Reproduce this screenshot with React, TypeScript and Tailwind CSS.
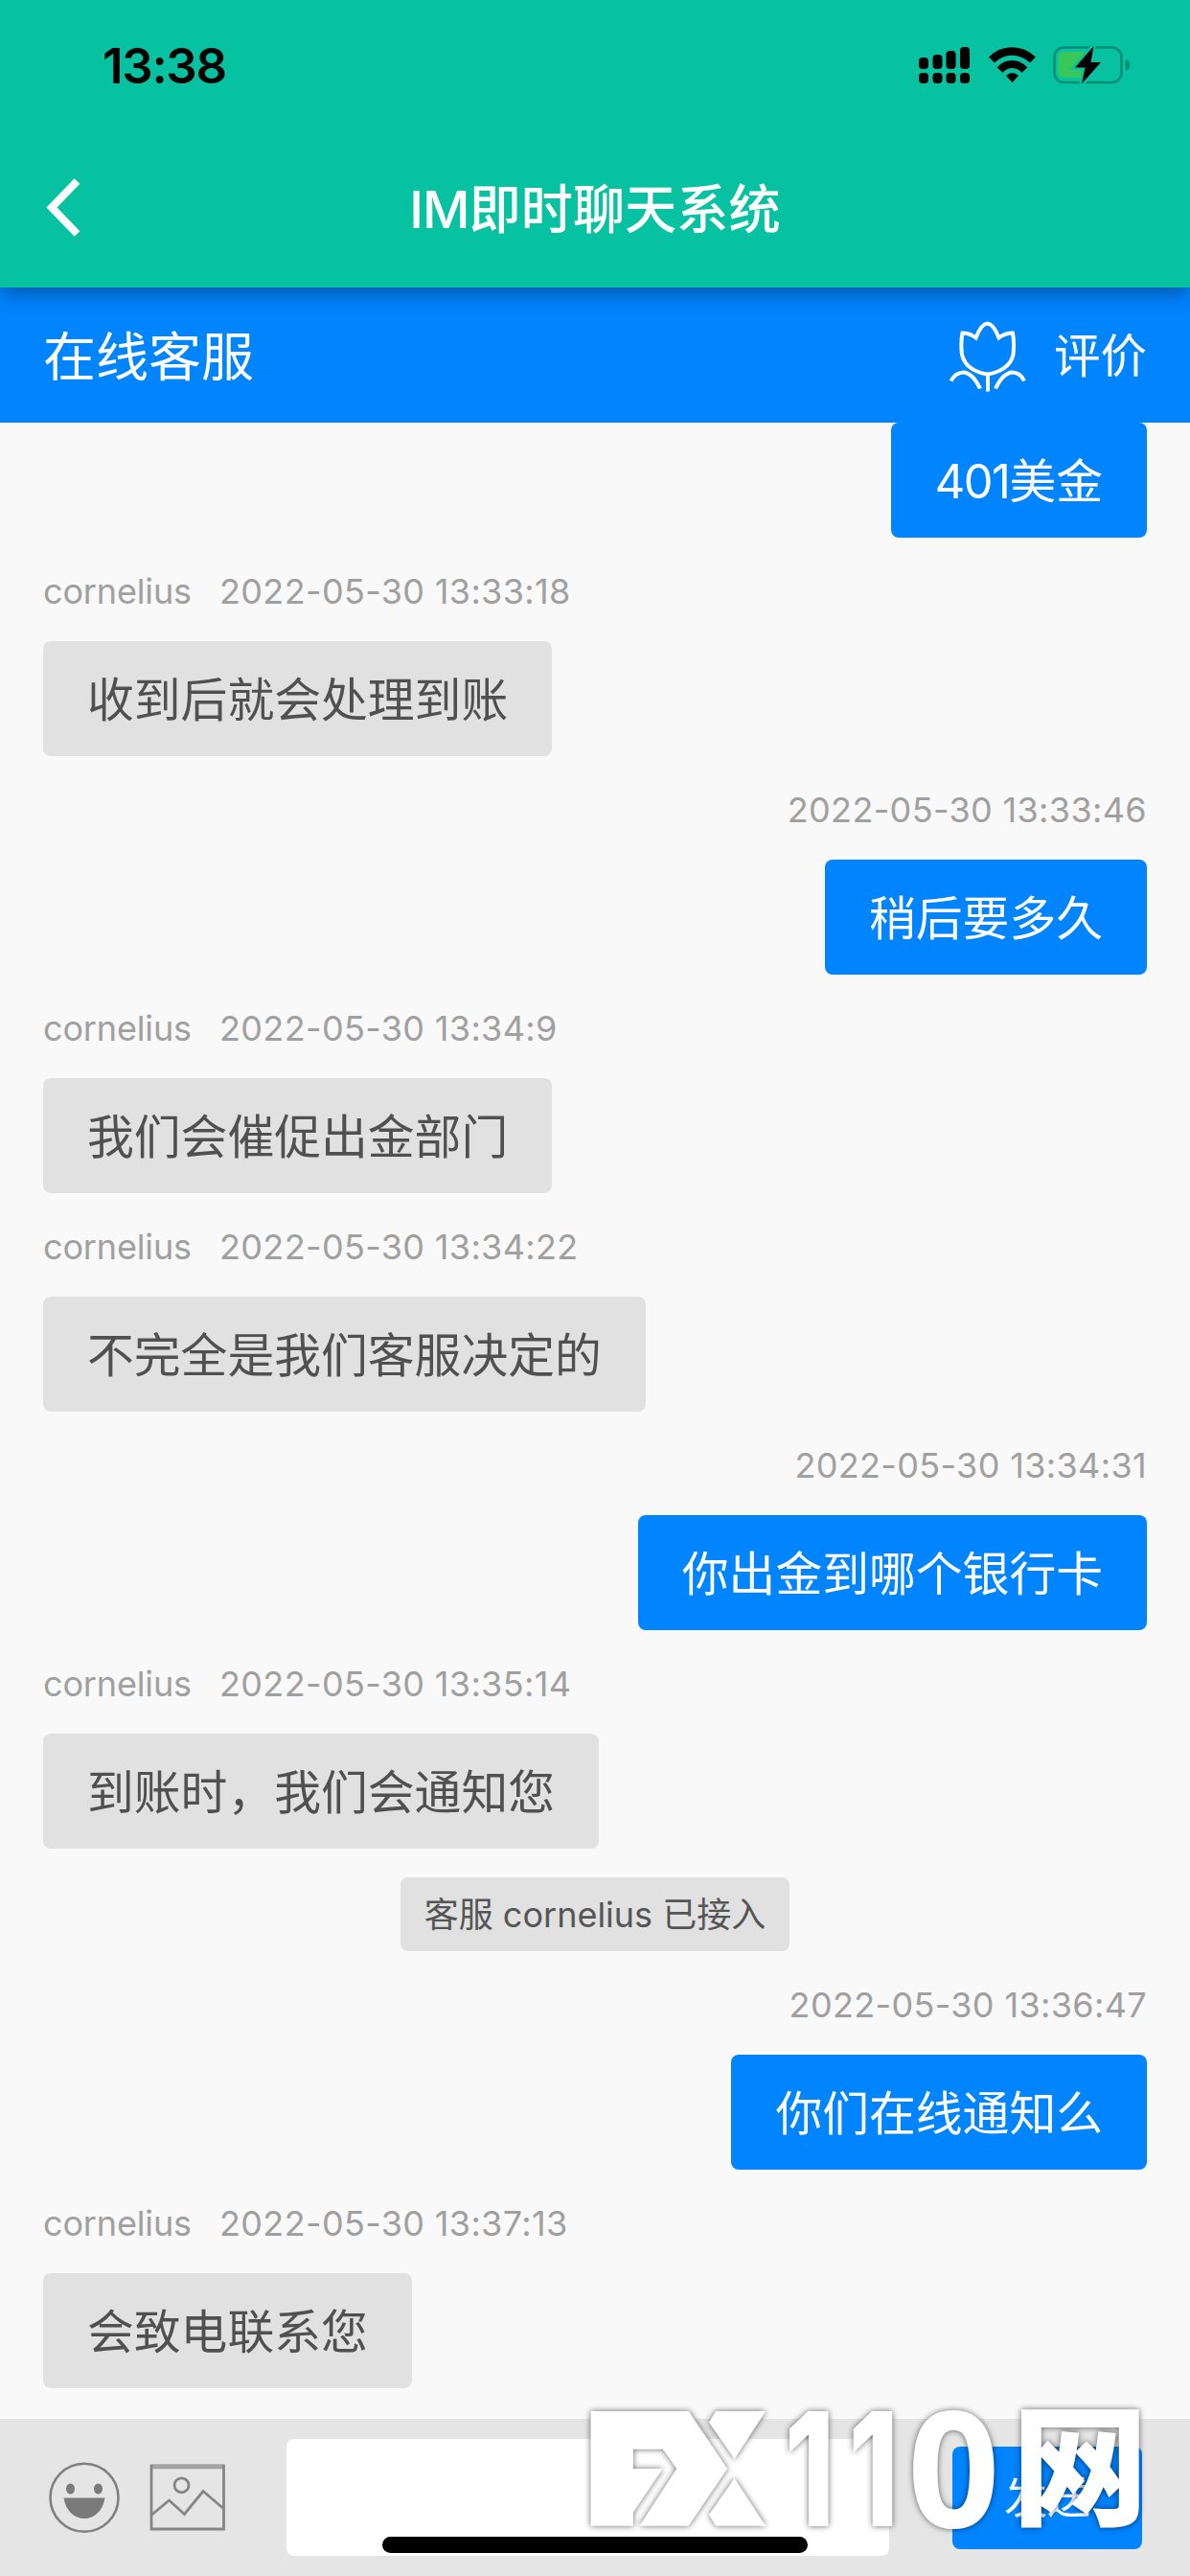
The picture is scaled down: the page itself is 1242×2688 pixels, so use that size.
type Message = {
  from: 'agent' | 'me' | 'system';
  time?: string;
  text: string;
};

const messages: Message[] = [
  { from: 'agent', time: '2022-05-30 13:33:18', text: '收到后就会处理到账' },
  { from: 'me', time: '2022-05-30 13:33:46', text: '稍后要多久' },
  { from: 'agent', time: '2022-05-30 13:34:9', text: '我们会催促出金部门' },
  { from: 'agent', time: '2022-05-30 13:34:22', text: '不完全是我们客服决定的' },
  { from: 'me', time: '2022-05-30 13:34:31', text: '你出金到哪个银行卡' },
  { from: 'agent', time: '2022-05-30 13:35:14', text: '到账时，我们会通知您' },
  { from: 'system', text: '客服 cornelius 已接入' },
  { from: 'me', time: '2022-05-30 13:36:47', text: '你们在线通知么' },
  { from: 'agent', time: '2022-05-30 13:37:13', text: '会致电联系您' },
];

function StatusIcons() {
  return (
    <svg width="230" height="48" viewBox="953 44 230 48" fill="none">
      <g fill="#000">
        <rect x="958" y="60" width="10" height="12" rx="4" />
        <rect x="972.500" y="57" width="10" height="15" rx="4" />
        <rect x="986.500" y="53" width="10" height="19" rx="4" />
        <rect x="1001" y="49" width="10" height="23" rx="4" />
        <rect x="958" y="76" width="10" height="11" rx="4" />
        <rect x="972.500" y="76" width="10" height="11" rx="4" />
        <rect x="986.500" y="76" width="10" height="11" rx="4" />
        <rect x="1001" y="76" width="10" height="11" rx="4" />
      </g>
      <path d="M1034 62.500 C1046 50.500 1064 50.500 1077 62.500" stroke="#000" strokeWidth="8.500" />
      <path d="M1042.500 73 C1050 65 1060.500 65 1068.500 73" stroke="#000" strokeWidth="8" />
      <path d="M1055.500 86 L1049 79 Q1055.500 73 1062 79 Z" fill="#000" />
      <rect x="1099.500" y="49.500" width="70" height="36.500" rx="10" stroke="#078e77" strokeWidth="2.600" />
      <path d="M1173.500 62 Q1178.500 63 1178.500 68 Q1178.500 73 1173.500 74 Z" fill="#078e77" />
      <path d="M1109 54 H1131 L1122 71 H1130 L1128 81 H1109 Q1103.500 81 1103.500 75 V60 Q1103.500 54 1109 54 Z" fill="#37c85a" />
      <path
        d="M1140.500 48 L1121 70.500 H1131.500 L1128 87.500 L1148 65 H1137.500 Z"
        fill="#000"
        stroke="#06c2a0"
        strokeWidth="5"
        paintOrder="stroke"
      />
    </svg>
  );
}

function Tulip() {
  return (
    <svg width="84" height="80" viewBox="985 331 84 80" fill="none" stroke="#fff" strokeWidth="4">
      <path d="M1016.500 352.500 C1019 346 1023 338 1028.500 337.500 C1034 338 1038 346 1040.500 352.500 C1045 349 1050 347.500 1055 347.500 C1056.500 356 1056 365 1055.500 370 C1053 382 1041 389 1028.500 390.500 C1016 389 1004.500 382 1002 370 C1001 362 1001 355 1002.500 347.500 C1008 347.500 1012 349 1016.500 352.500 Z" />
      <path d="M1029 391 V408.500 M990.500 397.500 C994 391 998 388.500 1004 388.500 C1012 389.500 1017 397 1021 405.500 M1067 397.500 C1064 391 1060 388.500 1054 388.500 C1046 389.500 1041 397 1037 405.500" />
    </svg>
  );
}

function Smile() {
  return (
    <svg width="76" height="76" viewBox="49.500 2568 76 76" fill="none">
      <circle cx="87.500" cy="2606.200" r="35.500" stroke="#808080" strokeWidth="2.600" />
      <ellipse cx="73" cy="2597" rx="4.500" ry="5.500" fill="#7a7a7a" />
      <ellipse cx="102" cy="2597" rx="4.500" ry="5.500" fill="#7a7a7a" />
      <path d="M66 2606.500 H109 C107 2620 98 2628 87.500 2628 C77 2628 68 2620 66 2606.500 Z" fill="#7a7a7a" />
    </svg>
  );
}

function Picture() {
  return (
    <svg width="80" height="72" viewBox="155.500 2570 80 72" fill="none" stroke="#858585" strokeWidth="2.800">
      <path d="M156.500 2573.800 H234" stroke="#a4a4a4" strokeWidth="5" />
      <path d="M157.500 2572 V2639 H233 V2572" />
      <circle cx="189" cy="2593.300" r="7.500" />
      <path d="M158 2624 L176 2609 L192 2623.500 L211.500 2599.500 L232 2617" />
    </svg>
  );
}

function Watermark() {
  return (
    <div className="pointer-events-none absolute top-[2500px] left-[600px] flex h-[150px] w-[620px] text-white [filter:drop-shadow(0_0_3px_rgba(0,0,0,0.6))]">
      <svg className="shrink-0" width="210" height="150" viewBox="600 2500 210 150" fill="#fff">
        <path d="M616.500 2516 H718.800 L759.200 2576 L718.800 2635.700 H667.400 L706.200 2576 L691.800 2555.700 H660.900 V2576 H691.800 L660.900 2621.700 V2635.700 H616.500 Z" />
        <path d="M747 2516 H799.200 L766.600 2566 L740 2527.700 Z" />
        <path d="M766.600 2586 L799.200 2635.700 H747 L740 2624 Z" />
      </svg>
      <span className="w-[137px] shrink-0 origin-left scale-x-72 pl-[12px] text-[165px] leading-[152px] font-extrabold tracking-[20px] whitespace-nowrap">11</span>
      <span className="-mt-[3px] w-[109px] shrink-0 font-['Open_Sans'] text-[169px] leading-[150px] font-bold whitespace-nowrap">0</span>
      <span className="-mt-[10px] origin-left scale-x-104 font-['Noto_Sans_CJK_SC'] text-[137px] leading-[150px] font-black">网</span>
    </div>
  );
}

function Row({ message }: { message: Message }) {
  if (message.from === 'system') {
    return (
      <div className="flex h-[107px] items-end justify-center">
        <div className="flex h-[77px] w-[406px] items-center justify-center rounded-[8px] bg-[#e1e1e1] text-[36px] whitespace-nowrap text-[#555]">
          {message.text}
        </div>
      </div>
    );
  }
  const mine = message.from === 'me';
  return (
    <div className={mine ? 'flex flex-col items-end' : 'flex flex-col items-start'}>
      <div className="flex h-[108px] items-center pt-[4px] text-[36px] tracking-[0.35px] whitespace-nowrap text-[#a0a0a0]">
        {!mine && <span className="w-[184px] tracking-[-0.15px]">cornelius</span>}
        <span>{message.time}</span>
      </div>
      <div
        className={
          mine
            ? 'flex h-[120px] items-center rounded-[8px] bg-[#0084ff] px-[46px] pt-[3px] text-[48.800px] whitespace-nowrap text-white'
            : 'flex h-[120px] items-center rounded-[8px] bg-[#e1e1e1] px-[46px] pt-[3px] text-[48.800px] whitespace-nowrap text-[#505050]'
        }
      >
        {message.text}
      </div>
    </div>
  );
}

export default function App() {
  return (
    <div className="relative flex h-[2688px] w-[1242px] flex-col overflow-hidden bg-[#f9f9f9] font-['Inter','Noto_Sans_CJK_SC',sans-serif]">
      <header className="relative z-10 h-[300px] shrink-0 bg-[#06c2a0] shadow-[0_6px_20px_rgba(0,0,0,0.35)]">
        <div className="flex h-[136px] items-center justify-between pr-[58px] pl-[107px]">
          <span className="pt-[2px] text-[51px] font-semibold tracking-[-1.3px] text-black">13:38</span>
          <StatusIcons />
        </div>
        <div className="flex h-[164px] items-center pl-[44px]">
          <svg width="44" height="68" viewBox="44 184 44 68" fill="none" stroke="#fff" strokeWidth="8" className="shrink-0">
            <path d="M80.500 189 L54 216.500 L80.500 244" />
          </svg>
          <h1 className="flex-1 pr-[88px] text-center text-[54.200px] leading-[80px] font-medium text-white">
            <span className="tracking-[-1px]">IM</span>即时聊天系统
          </h1>
        </div>
      </header>

      <div className="flex h-[141px] shrink-0 items-center justify-between bg-[#0084ff] pr-[45px] pl-[45px] text-white">
        <span className="pt-[3px] text-[55px]">在线客服</span>
        <div className="flex items-center gap-[29px]">
          <Tulip />
          <span className="pt-[4px] text-[48.500px]">评价</span>
        </div>
      </div>

      <main className="flex flex-1 flex-col px-[45px]">
        <div className="flex h-[120px] items-center self-end rounded-[8px] bg-[#0084ff] px-[46px] pt-[3px] text-[48.800px] text-white">
          <span className="tracking-[-1.5px]">401</span>美金
        </div>
        {messages.map((message) => (
          <Row key={message.text} message={message} />
        ))}
      </main>

      <footer className="flex h-[164px] shrink-0 items-start bg-[#e5e5e5] pl-[49.500px]">
        <div className="flex h-full w-[249.500px] items-center gap-[30px]">
          <Smile />
          <Picture />
        </div>
        <div className="mt-[21px] h-[122px] w-[629px] rounded-[8px] bg-white" />
        <button className="mt-[29px] ml-[66px] h-[107px] w-[198px] rounded-[8px] bg-[#0084ff] text-[45px] text-white">发送</button>
      </footer>

      <div className="absolute top-[2647px] left-[399px] h-[17px] w-[444px] rounded-full bg-black" />
      <Watermark />
    </div>
  );
}
